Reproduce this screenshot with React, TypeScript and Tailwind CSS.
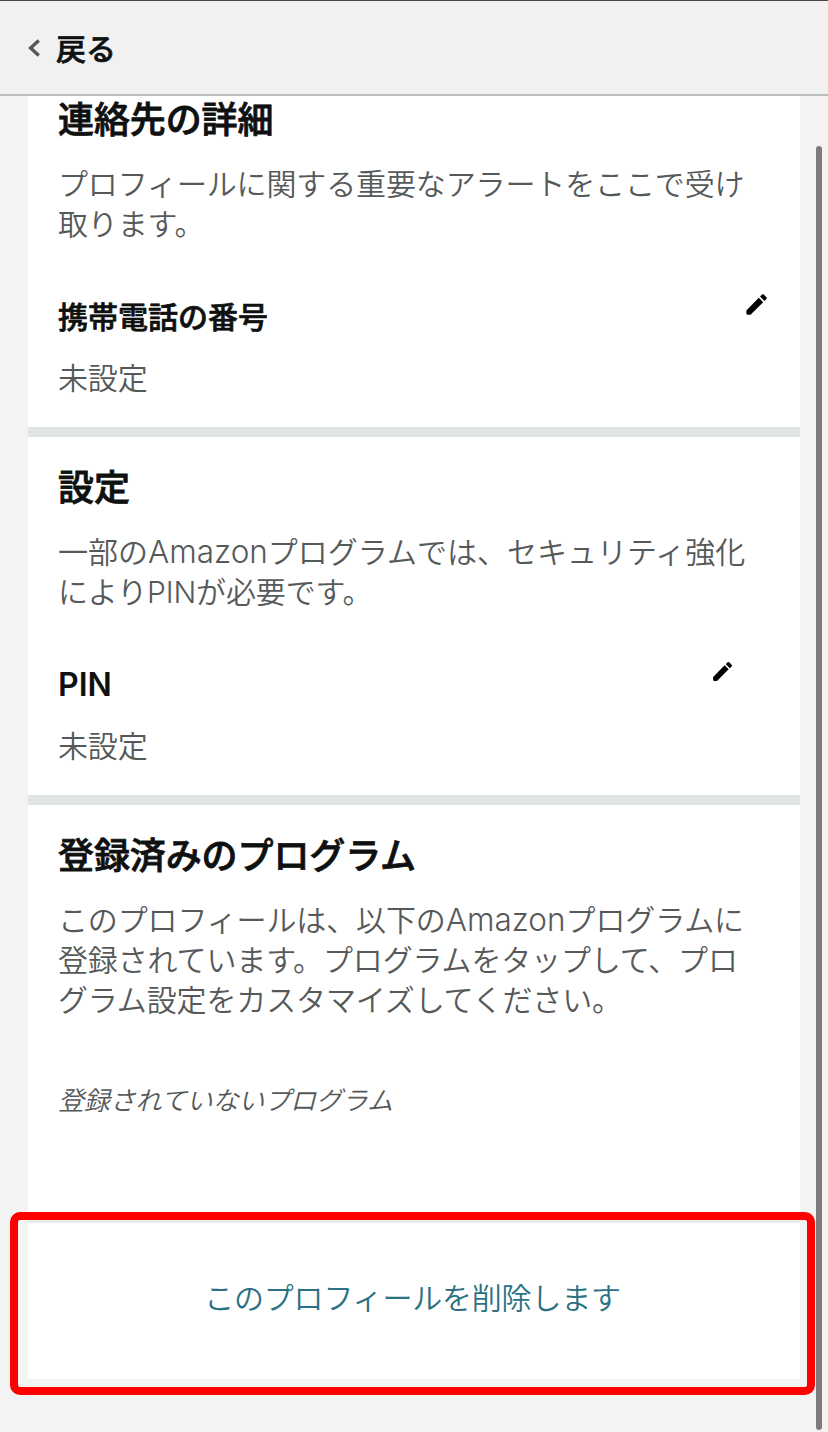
import type { ReactNode } from "react";

function Pencil({ className }: { className: string }) {
  return (
    <svg viewBox="0 0 24 24" className={className} fill="#000" aria-hidden="true">
      <path d="M3 17.3V20a1 1 0 0 0 1 1h2.7L17.95 9.94l-3.9-3.9L3 17.3zM20.8 7.1a1.1 1.1 0 0 0 0-1.5l-2.4-2.4a1.1 1.1 0 0 0-1.5 0l-1.75 1.75 3.9 3.9L20.8 7.1z" />
    </svg>
  );
}

function Heading({ children }: { children: ReactNode }) {
  return (
    <h2 className="h-12 text-[36px] leading-[48px] font-medium tracking-[-0.1px] whitespace-nowrap text-[#0f1111] [-webkit-text-stroke:0.8px_#0f1111]">
      {children}
    </h2>
  );
}

function Line({ className = "", children }: { className?: string; children: ReactNode }) {
  return <span className={`block h-10 whitespace-nowrap ${className}`}>{children}</span>;
}

function Brand() {
  return <span className="text-[31.5px] tracking-normal">Amazon</span>;
}

function Setting({ label, icon }: { label: ReactNode; icon: ReactNode }) {
  return (
    <>
      <div className="mt-[45px] flex h-12 items-start justify-between">
        <h3 className="mt-2 leading-10 tracking-normal whitespace-nowrap text-[#0f1111]">{label}</h3>
        <button type="button" className="mt-0.5 block">
          {icon}
        </button>
      </div>
      <p className="mt-[21px] h-10">未設定</p>
    </>
  );
}

export default function App() {
  return (
    <div
      lang="ja"
      className="relative flex h-[1432px] w-[828px] flex-col overflow-hidden bg-[#f3f3f3] font-['Inter','Noto_Sans_CJK_JP',sans-serif] text-[30px] leading-10 font-[350] tracking-[-0.13px] text-[#565959]"
    >
      <header className="flex h-24 shrink-0 items-center border-t border-b-2 border-t-[#4a4648] border-b-[#b8bebc] bg-[#f1f1f1] pl-7">
        <svg viewBox="0 0 12 18" className="h-[18px] w-3" fill="none" stroke="#565959" strokeWidth="3.4" aria-hidden="true">
          <path d="M10.8 1.5 2.6 9l8.2 7.5" />
        </svg>
        <span className="mt-[3px] ml-4 font-medium tracking-normal text-[#0f1111] [-webkit-text-stroke:0.7px_#0f1111]">
          戻る
        </span>
      </header>

      <main className="mx-7 w-[772px]">
        <section className="h-[341px] border-b-10 border-[#e1e5e4] bg-white px-[30px]">
          <Heading>連絡先の詳細</Heading>
          <p className="mt-5">
            <Line>プロフィールに関する重要なアラートをここで受け</Line>
            <Line>取ります。</Line>
          </p>
          <Setting
            label={<span className="font-medium [-webkit-text-stroke:0.7px_#0f1111]">携帯電話の番号</span>}
            icon={<Pencil className="size-[27px]" />}
          />
        </section>

        <section className="h-[368px] border-b-10 border-[#e1e5e4] bg-white px-[30px] pt-[27px]">
          <Heading>設定</Heading>
          <p className="mt-5">
            <Line className="tracking-normal">
              一部の
              <Brand />
              プログラムでは、セキュリティ強化
            </Line>
            <Line>によりPINが必要です。</Line>
          </p>
          <Setting
            label={<span className="text-[32px] font-semibold">PIN</span>}
            icon={<Pencil className="mr-[35px] size-[25px]" />}
          />
        </section>

        <section className="h-[418px] border-b-10 border-[#e9edec] bg-white px-[30px] pt-[27px]">
          <Heading>登録済みのプログラム</Heading>
          <p className="mt-5">
            <Line>
              このプロフィールは、以下の
              <Brand />
              プログラムに
            </Line>
            <Line>登録されています。プログラムをタップして、プロ</Line>
            <Line>グラム設定をカスタマイズしてください。</Line>
          </p>
          <p className="mt-[61px] h-10 text-[26px] whitespace-nowrap italic">登録されていないプログラム</p>
        </section>

        <section className="flex h-[156px] items-center justify-center bg-white">
          <button type="button" className="mr-[3px] mb-[6px] tracking-[-0.2px] whitespace-nowrap text-[#2c7183]">
            このプロフィールを削除します
          </button>
        </section>
      </main>

      <div className="absolute top-[1212px] left-[10px] h-[183px] w-[805px] rounded-[10px] border-8 border-[#ff0000]" />
      <div className="absolute top-[146px] left-[816px] h-[1284px] w-1.5 rounded-full bg-[#7b7b7b]" />
    </div>
  );
}
